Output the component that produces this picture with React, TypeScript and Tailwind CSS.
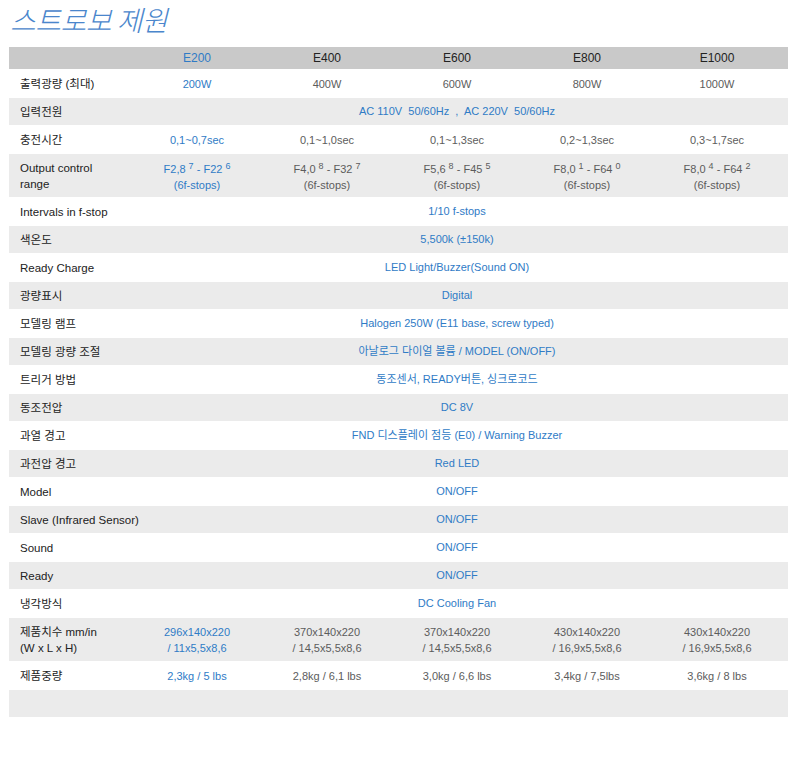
import React from "react"

const BLUE = "text-[#2f7bc6]"
const GREY = "text-[#5c5c5c]"

type Row = {
  label: React.ReactNode
  tall?: boolean
  span?: React.ReactNode
  cells?: React.ReactNode[]
}

const Sup = ({ n }: { n: string }) => (
  <span className="text-[9px] align-[4px] ml-[3px]">{n}</span>
)

const Range = ({ a, b, c, d }: { a: string; b: string; c: string; d: string }) => (
  <>
    <span>
      {a}
      <Sup n={b} /> - {c}
      <Sup n={d} />
    </span>
    <span>(6f-stops)</span>
  </>
)

const rows: Row[] = [
  { label: "출력광량 (최대)", cells: ["200W", "400W", "600W", "800W", "1000W"] },
  { label: "입력전원", span: "AC 110V\u00a0 50/60Hz\u00a0 ,\u00a0 AC 220V\u00a0 50/60Hz" },
  { label: "충전시간", cells: ["0,1~0,7sec", "0,1~1,0sec", "0,1~1,3sec", "0,2~1,3sec", "0,3~1,7sec"] },
  {
    label: (
      <>
        <span>Output control</span>
        <span>range</span>
      </>
    ),
    tall: true,
    cells: [
      <Range a="F2,8" b="7" c="F22" d="6" />,
      <Range a="F4,0" b="8" c="F32" d="7" />,
      <Range a="F5,6" b="8" c="F45" d="5" />,
      <Range a="F8,0" b="1" c="F64" d="0" />,
      <Range a="F8,0" b="4" c="F64" d="2" />,
    ],
  },
  { label: "Intervals in f-stop", span: "1/10 f-stops" },
  { label: "색온도", span: "5,500k (±150k)" },
  { label: "Ready Charge", span: "LED Light/Buzzer(Sound ON)" },
  { label: "광량표시", span: "Digital" },
  { label: "모델링 램프", span: "Halogen 250W (E11 base, screw typed)" },
  { label: "모델링 광량 조절", span: "아날로그 다이얼 볼륨 / MODEL (ON/OFF)" },
  { label: "트리거 방법", span: "동조센서, READY버튼, 싱크로코드" },
  { label: "동조전압", span: "DC 8V" },
  { label: "과열 경고", span: "FND 디스플레이 점등 (E0) / Warning Buzzer" },
  { label: "과전압 경고", span: "Red LED" },
  { label: "Model", span: "ON/OFF" },
  { label: "Slave (Infrared Sensor)", span: "ON/OFF" },
  { label: "Sound", span: "ON/OFF" },
  { label: "Ready", span: "ON/OFF" },
  { label: "냉각방식", span: "DC Cooling Fan" },
  {
    label: (
      <>
        <span>제품치수 mm/in</span>
        <span>(W x L x H)</span>
      </>
    ),
    tall: true,
    cells: [
      <><span>296x140x220</span><span>/ 11x5,5x8,6</span></>,
      <><span>370x140x220</span><span>/ 14,5x5,5x8,6</span></>,
      <><span>370x140x220</span><span>/ 14,5x5,5x8,6</span></>,
      <><span>430x140x220</span><span>/ 16,9x5,5x8,6</span></>,
      <><span>430x140x220</span><span>/ 16,9x5,5x8,6</span></>,
    ],
  },
  { label: "제품중량", cells: ["2,3kg / 5 lbs", "2,8kg / 6,1 lbs", "3,0kg / 6,6 lbs", "3,4kg / 7,5lbs", "3,6kg / 8 lbs"] },
]

export default function App() {
  return (
    <div
      className="w-[800px] h-[758px] bg-white"
      style={{ fontFamily: '"Liberation Sans", "Noto Sans CJK KR", sans-serif' }}
    >
      <div className="h-[47px] pl-[10px] pt-[2px]">
        <h1
          className="inline-block pr-[8px] text-[28px] leading-[34px] font-light italic text-[#4a86cc] tracking-[-0.5px] whitespace-nowrap"
          style={{ fontFamily: '"Noto Sans CJK KR", sans-serif' }}
        >
          스트로보 제원
        </h1>
      </div>

      <div className="mx-[9px] w-[779px]">
        {/* header */}
        <div className="flex h-[22px] items-center bg-[#c9c9c9] text-[12px] text-[#222]">
          <div className="w-[123px]" />
          {["E200", "E400", "E600", "E800", "E1000"].map((m, i) => (
            <div key={m} className={`w-[130px] text-center ${i === 0 ? BLUE : ""}`}>
              {m}
            </div>
          ))}
        </div>

        {rows.map((r, idx) => {
          const bg = idx % 2 === 1 ? "bg-[#ebebeb]" : "bg-white"
          const h = r.tall ? "h-[43px]" : idx % 2 === 1 ? "h-[27px]" : "h-[29px]"
          return (
            <div key={idx} className={`flex items-center ${bg} ${h}`}>
              <div className="w-[123px] pl-[11px] flex flex-col leading-[16px] text-[11.5px] text-[#222] whitespace-nowrap">
                {r.label}
              </div>
              {r.span ? (
                <div className={`w-[650px] text-center text-[11px] whitespace-nowrap ${BLUE}`}>{r.span}</div>
              ) : (
                r.cells!.map((c, i) => (
                  <div
                    key={i}
                    className={`w-[130px] flex flex-col items-center leading-[16px] text-[11px] whitespace-nowrap ${i === 0 ? BLUE : GREY}`}
                  >
                    {c}
                  </div>
                ))
              )}
            </div>
          )
        })}
        <div className="h-[27px] bg-[#ebebeb]" />
      </div>
    </div>
  )
}
